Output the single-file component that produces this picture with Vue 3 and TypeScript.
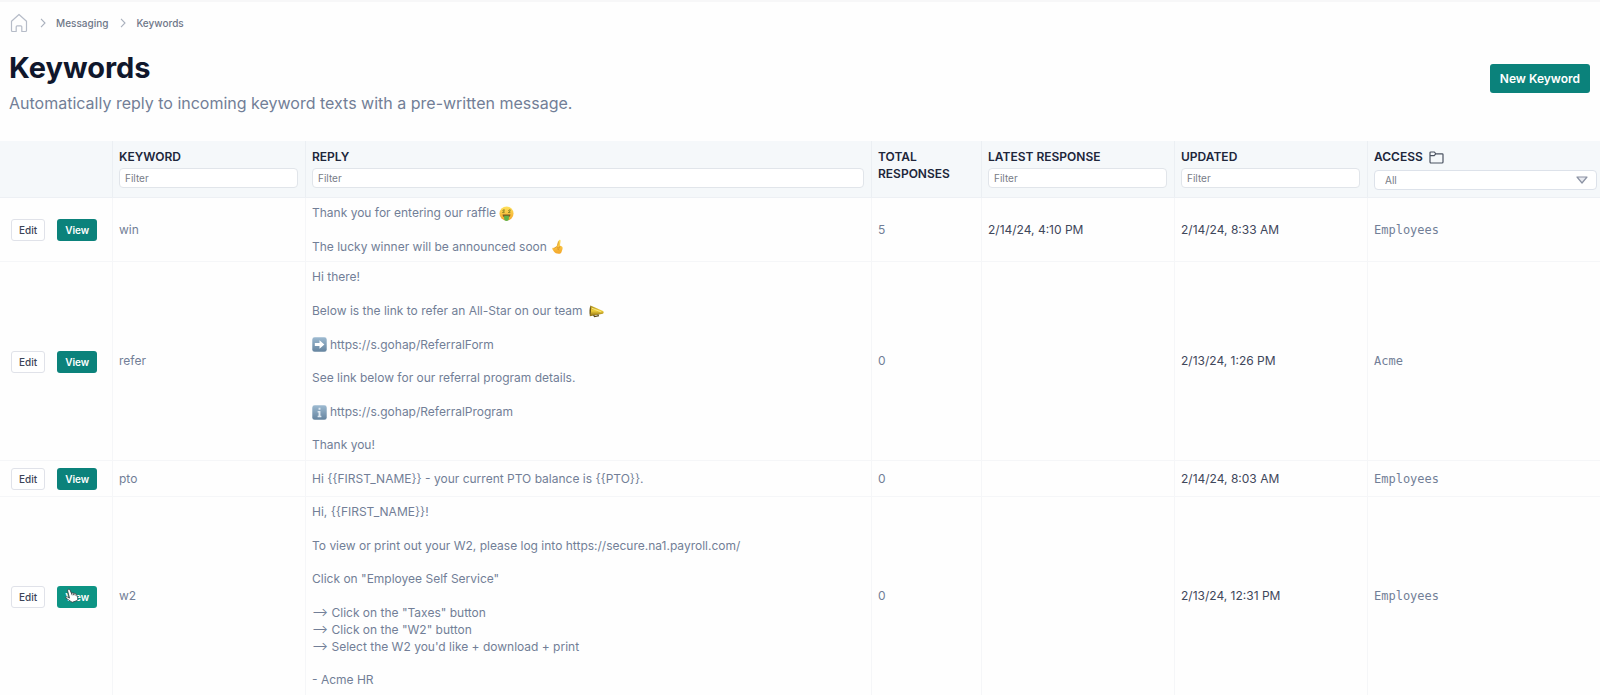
<script setup lang="ts">
import { ref } from 'vue'

type Emoji = 'money' | 'luck' | 'horn' | 'arrow' | 'info'

interface Line {
  text: string
  before?: Emoji
  after?: Emoji
  spaced?: boolean
}

interface Keyword {
  name: string
  reply: Line[]
  total: number
  latest: string
  updated: string
  access: string
  hovered?: boolean
}

const filters = ref({ keyword: '', reply: '', latest: '', updated: '' })
const access = ref('All')

const keywords: Keyword[] = [
  {
    name: 'win',
    reply: [
      { text: 'Thank you for entering our raffle', after: 'money' },
      { text: '' },
      { text: 'The lucky winner will be announced soon', after: 'luck' },
    ],
    total: 5,
    latest: '2/14/24, 4:10 PM',
    updated: '2/14/24, 8:33 AM',
    access: 'Employees',
  },
  {
    name: 'refer',
    reply: [
      { text: 'Hi there!' },
      { text: '' },
      { text: 'Below is the link to refer an All-Star on our team', after: 'horn', spaced: true },
      { text: '' },
      { text: 'https://s.gohap/ReferralForm', before: 'arrow' },
      { text: '' },
      { text: 'See link below for our referral program details.' },
      { text: '' },
      { text: 'https://s.gohap/ReferralProgram', before: 'info' },
      { text: '' },
      { text: 'Thank you!' },
    ],
    total: 0,
    latest: '',
    updated: '2/13/24, 1:26 PM',
    access: 'Acme',
  },
  {
    name: 'pto',
    reply: [{ text: 'Hi {{FIRST_NAME}} - your current PTO balance is {{PTO}}.' }],
    total: 0,
    latest: '',
    updated: '2/14/24, 8:03 AM',
    access: 'Employees',
  },
  {
    name: 'w2',
    reply: [
      { text: 'Hi, {{FIRST_NAME}}!' },
      { text: '' },
      { text: 'To view or print out your W2, please log into https://secure.na1.payroll.com/' },
      { text: '' },
      { text: 'Click on "Employee Self Service"' },
      { text: '' },
      { text: '⟶ Click on the "Taxes" button' },
      { text: '⟶ Click on the "W2" button' },
      { text: "⟶ Select the W2 you'd like + download + print" },
      { text: '' },
      { text: '- Acme HR' },
    ],
    total: 0,
    latest: '',
    updated: '2/13/24, 12:31 PM',
    access: 'Employees',
    hovered: true,
  },
]
</script>

<template>
  <div class="page">
    <svg class="defs" aria-hidden="true">
      <defs>
        <linearGradient id="tile" x1="0" y1="0" x2="0" y2="1">
          <stop offset="0" stop-color="#9dbad1" />
          <stop offset="1" stop-color="#65849f" />
        </linearGradient>
        <linearGradient id="face" x1="0" y1="0" x2="0" y2="1">
          <stop offset="0" stop-color="#ffe15a" />
          <stop offset="1" stop-color="#f3a52b" />
        </linearGradient>
        <linearGradient id="brass" x1="0" y1="0" x2="0" y2="1">
          <stop offset="0" stop-color="#a58a1c" />
          <stop offset="0.5" stop-color="#f0cf3a" />
          <stop offset="1" stop-color="#8a6b10" />
        </linearGradient>
      </defs>
      <symbol id="money" viewBox="0 0 16 16">
        <circle cx="8" cy="8" r="7.5" fill="url(#face)" />
        <path d="M3.800 9h8.400c0 2.200-1.900 3.500-4.200 3.500S3.800 11.200 3.800 9z" fill="#7a5a20" />
        <path d="M5.500 10.300h5v3.500a2.500 2.200 0 0 1-5 0z" fill="#5fb24a" />
        <path d="M6.300 4.500c-2.200-1-2.800.8-1.400 1.200s1.300 1.800-1.400 1.100M12.500 4.500c-2.200-1-2.800.8-1.400 1.200s1.300 1.800-1.400 1.100" fill="none" stroke="#7c7a1c" stroke-width="1" />
      </symbol>
      <symbol id="luck" viewBox="0 0 16 16">
        <path d="M6.800 8.200 9.300 1.500c.5-1.200 2.200-.8 2 .5L10.600 7l1.700.8c1.200.5 1.400 2 .9 3.500l-1 2.700c-.5 1.200-1.600 1.700-3 1.700-2.300 0-3.900-.6-4.900-2L2.600 11c-.6-1.400.6-2.200 1.600-1.300z" fill="url(#face)" />
        <path d="M9 2.500 8.200 7M4.500 9.800l2.300-1.500 2.500 1-1.300 1.500 2 1M10.600 7.500l-.5 2.500" fill="none" stroke="#d48f22" stroke-width="0.800" />
      </symbol>
      <symbol id="horn" viewBox="0 0 16 16">
        <path d="M1.500 1.500 15 7.500c1 .8.8 2.700-.3 3L1 13z" fill="url(#brass)" />
        <path d="M1.500 1.500C.3 5 .2 9 1 13c1.200-3 1.600-8 .5-11.500z" fill="#6c5410" />
        <path d="m5 11.800.8 1.700 4.200-.8-.6-1.700" fill="none" stroke="#544414" stroke-width="1.200" />
        <path d="m3 4.500 10 4" stroke="#fbe882" stroke-width="1" />
      </symbol>
      <symbol id="arrow" viewBox="0 0 16 16">
        <rect x="0.300" y="0.300" width="15.400" height="15.400" rx="2.500" fill="url(#tile)" />
        <path d="M3 6.300h5V3.500L13.200 8 8 12.500V9.700H3z" fill="#fff" />
      </symbol>
      <symbol id="info" viewBox="0 0 16 16">
        <rect x="0.300" y="0.300" width="15.400" height="15.400" rx="2.500" fill="url(#tile)" />
        <path d="M7 3h2v2H7zM6 6.500h3v5h1V13H6v-1.500h1V8H6z" fill="#dfe9f1" />
      </symbol>
    </svg>

    <nav class="crumbs" aria-label="Breadcrumb">
      <a href="#" class="home" aria-label="Home">
        <svg width="18" height="20" viewBox="0 0 18 20" fill="none" stroke="#b6bcc8" stroke-width="1.200" stroke-linejoin="round">
          <path d="M1.500 8.200 9 1.500l7.500 6.700v9.300a1 1 0 0 1-1 1h-3.700v-4.700a1 1 0 0 0-1-1H7.200a1 1 0 0 0-1 1v4.700H2.500a1 1 0 0 1-1-1z" />
        </svg>
      </a>
      <svg class="sep" width="6" height="10" viewBox="0 0 6 10" fill="none" stroke="#a9b0bd" stroke-width="1.100"><path d="m1 .8 4 4.200-4 4.200" /></svg>
      <a href="#">Messaging</a>
      <svg class="sep" width="6" height="10" viewBox="0 0 6 10" fill="none" stroke="#a9b0bd" stroke-width="1.100"><path d="m1 .8 4 4.200-4 4.200" /></svg>
      <a href="#" aria-current="page">Keywords</a>
    </nav>

    <header class="heading">
      <div class="titles">
        <h1>Keywords</h1>
        <p>Automatically reply to incoming keyword texts with a pre-written message.</p>
      </div>
      <button type="button" class="primary new">New Keyword</button>
    </header>

    <table>
      <colgroup>
        <col class="c-actions" />
        <col class="c-mid" />
        <col />
        <col class="c-total" />
        <col class="c-mid" />
        <col class="c-mid" />
        <col class="c-access" />
      </colgroup>
      <thead>
        <tr>
          <th></th>
          <th scope="col">
            <label for="f-keyword">Keyword</label>
            <input id="f-keyword" v-model="filters.keyword" type="text" placeholder="Filter" />
          </th>
          <th scope="col">
            <label for="f-reply">Reply</label>
            <input id="f-reply" v-model="filters.reply" type="text" placeholder="Filter" />
          </th>
          <th scope="col">Total Responses</th>
          <th scope="col">
            <label for="f-latest">Latest Response</label>
            <input id="f-latest" v-model="filters.latest" type="text" placeholder="Filter" />
          </th>
          <th scope="col">
            <label for="f-updated">Updated</label>
            <input id="f-updated" v-model="filters.updated" type="text" placeholder="Filter" />
          </th>
          <th scope="col" class="access-head">
            <label for="f-access">
              Access
              <svg width="15" height="13" viewBox="0 0 15 13" fill="none" stroke="#4b5361" stroke-width="1.200" stroke-linejoin="round">
                <path d="M1 11V1.800a.8.8 0 0 1 .8-.8h3.600l1.400 1.800h6.400a.8.8 0 0 1 .8.8V11a1 1 0 0 1-1 1H2a1 1 0 0 1-1-1zM1 4.600h4.200l1.600-1.800" />
              </svg>
            </label>
            <div class="select">
              <select id="f-access" v-model="access">
                <option>All</option>
                <option>Employees</option>
                <option>Acme</option>
              </select>
              <svg width="12" height="8" viewBox="0 0 12 8" fill="#e8eaf0" stroke="#8b92a3" stroke-width="1.200" stroke-linejoin="round"><path d="M1 1h10L6 7z" /></svg>
            </div>
          </th>
        </tr>
      </thead>
      <tbody>
        <tr v-for="k in keywords" :key="k.name">
          <td>
            <div class="actions">
              <button type="button" class="edit">Edit</button>
              <button type="button" class="primary view" :class="{ hovered: k.hovered }">
                View
                <svg v-if="k.hovered" class="pointer" width="14" height="15" viewBox="0 0 14 15" fill="#fff" stroke="#30383c" stroke-width="0.800" stroke-linejoin="round">
                  <path d="M3.200 1.500c.7-.6 1.500-.2 1.800.5L6.300 5c.6-.5 1.400-.3 1.700.3.6-.4 1.400-.2 1.700.4.7-.3 1.500 0 1.800.8l1 2.700c.4 1.200.2 2.300-.3 3.300l-5 1.800c-1.200-.7-2.500-1.700-3.500-2.400L1 10.300c-.6-1 .3-1.900 1.300-1.400l2.200 1.200L2.700 3c-.2-.6 0-1.200.5-1.500z" />
                  <path d="m6.300 5 .9 2.300M8 5.300l.8 2M9.700 5.700l.7 1.800" />
                </svg>
              </button>
            </div>
          </td>
          <td>{{ k.name }}</td>
          <td>
            <div v-for="(line, i) in k.reply" :key="i" class="line">
              <svg v-if="line.before" class="emoji before"><use :href="'#' + line.before" /></svg>
              <span>{{ line.text }}</span>
              <svg v-if="line.after" class="emoji after" :class="{ spaced: line.spaced }"><use :href="'#' + line.after" /></svg>
            </div>
          </td>
          <td>{{ k.total }}</td>
          <td class="date">{{ k.latest }}</td>
          <td class="date">{{ k.updated }}</td>
          <td class="mono">{{ k.access }}</td>
        </tr>
      </tbody>
    </table>
  </div>
</template>

<style>
body {
  margin: 0;
  background: #fefefe;
}
</style>

<style scoped>
.page {
  border-top: 2px solid #f7f7f8;
  font-family: Inter, 'Liberation Sans', sans-serif;
  font-size: 12px;
  line-height: 1.4;
  color: #727e97;
}
.page *,
.page *::before {
  box-sizing: border-box;
}
.defs {
  position: absolute;
  width: 0;
  height: 0;
}
button,
input,
select {
  margin: 0;
  font-family: inherit;
}
.crumbs {
  display: flex;
  align-items: center;
  height: 42px;
  padding-left: 10px;
  font-size: 10px;
  font-weight: 500;
}
.crumbs a {
  color: #6f7788;
  text-decoration: none;
}
.crumbs .home {
  display: flex;
}
.sep {
  margin: 0 10px 0 12px;
}
.heading {
  display: flex;
  align-items: center;
  justify-content: space-between;
  height: 97px;
  padding: 0 10px 28px 9px;
}
.titles {
  padding-top: 8px;
}
h1 {
  margin: 0;
  font-size: 29px;
  line-height: 36px;
  font-weight: 700;
  color: #10172c;
}
.heading p {
  margin: 5px 0 0;
  font-size: 16px;
  line-height: 24px;
}
.primary {
  border: 0;
  border-radius: 3px;
  background: #0b827b;
  color: #fff;
  font-weight: 600;
}
.new {
  height: 29px;
  padding: 0 10px;
  font-size: 12px;
}
table {
  width: 100%;
  table-layout: fixed;
  border-collapse: separate;
  border-spacing: 0;
}
.c-actions {
  width: 112px;
}
.c-mid {
  width: 193px;
}
.c-total {
  width: 110px;
}
.c-access {
  width: 233px;
}
th {
  height: 57px;
  padding: 8px 7px 0 6px;
  vertical-align: top;
  text-align: left;
  text-transform: uppercase;
  font-weight: 600;
  color: #20263a;
  background: #f5f8fa;
  border-bottom: 1px solid #edf0f4;
}
th + th {
  border-left: 1px solid #ebeff3;
}
th label {
  display: block;
}
th input {
  display: block;
  width: 100%;
  height: 20px;
  margin-top: 2px;
  padding: 0 5px;
  border: 1px solid #e1e5ea;
  border-radius: 4px;
  background: #fff;
  font-size: 10px;
  color: #5d6472;
  outline: 0;
}
th input::placeholder {
  color: #777c87;
  opacity: 1;
}
.access-head {
  padding-right: 3px;
}
.access-head label {
  display: flex;
  align-items: center;
  gap: 6px;
}
.select {
  display: grid;
  align-items: center;
  margin-top: 4px;
}
.select > * {
  grid-area: 1 / 1;
}
.select svg {
  justify-self: end;
  margin-right: 9px;
  pointer-events: none;
}
select {
  appearance: none;
  width: 100%;
  height: 20px;
  padding: 0 10px;
  border: 1px solid #dde2ea;
  border-radius: 4px;
  background: #fff;
  font-size: 10px;
  color: #777c87;
}
td {
  padding: 7px 6px 6px;
  vertical-align: middle;
  border-bottom: 1px solid #f5f6f8;
}
tbody tr:last-child td {
  border-bottom: 0;
}
td + td {
  border-left: 1px solid #f5f6f8;
}
.actions {
  display: flex;
  gap: 12px;
  padding-left: 5px;
}
.edit,
.view {
  height: 22px;
  font-size: 10px;
}
.edit {
  padding: 0 7px;
  border: 1px solid #e0e2e9;
  border-radius: 3px;
  background: #fff;
  color: #3c4457;
  font-weight: 500;
}
.view {
  position: relative;
  padding: 0 8px;
}
.hovered {
  background: #0d9484;
}
.pointer {
  position: absolute;
  top: 2px;
  left: 8px;
}
.line {
  display: flex;
  align-items: center;
  height: 1.4em;
  white-space: pre;
}
.emoji {
  width: 15px;
  height: 15px;
}
.before {
  margin-right: 3px;
}
.after {
  margin-left: 3px;
}
.spaced {
  margin-left: 6px;
}
.date {
  color: #3f475b;
}
.mono {
  font-family: 'DejaVu Sans Mono', 'Liberation Mono', monospace;
}
</style>
